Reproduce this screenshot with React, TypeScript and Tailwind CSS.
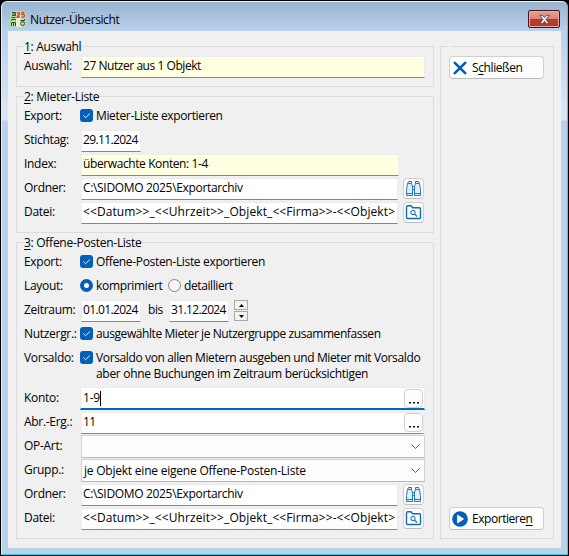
import type { ReactNode } from 'react';

function Group({ title, num, className, children }: { title: string; num: string; className: string; children: ReactNode }) {
  return (
    <section className={`relative border border-[#dcdcdc] pl-[7px] pt-[7px] ${className}`}>
      <h2 className="absolute -top-[9px] left-[7px] h-[17px] bg-[#f0f0f0] leading-[17px] tracking-[-0.28px]">
        <span className="underline underline-offset-2">{num}</span>: {title}
      </h2>
      {children}
    </section>
  );
}

function Row({ label, tall, children }: { label: string; tall?: boolean; children: ReactNode }) {
  return (
    <div className={`flex ${tall ? 'h-10' : 'h-6'}`}>
      <div className="w-[57px] shrink-0 leading-6 tracking-[-0.3px]">{label}</div>
      {children}
    </div>
  );
}

function Field({ className, children }: { className: string; children?: ReactNode }) {
  return (
    <div className={`mt-[2px] flex h-[22px] shrink-0 items-center overflow-hidden border border-[#ececec] border-b-[#868686] pb-[2px] pl-px leading-[18px] shadow-[inset_0_1px_0_#fff] ${className}`}>
      {children}
    </div>
  );
}

function Check() {
  return (
    <span className="mt-[5px] -ml-px mr-[3px] flex size-[13px] shrink-0 items-center justify-center rounded-[3px] bg-[#005fb8]">
      <svg className="size-[13px]" viewBox="0 0 13 13" fill="none" stroke="#e4effa" strokeWidth="1">
        <path d="M3.3 6.5 5.6 8.7 10 4.4" />
      </svg>
    </span>
  );
}

function IconButton({ children }: { children: ReactNode }) {
  return (
    <button className="ml-[5px] mt-[2px] flex size-[21px] items-center justify-center rounded-[4px] border border-[#d0d0d0] border-b-[#bcbcbc] bg-[#fdfdfd]">
      {children}
    </button>
  );
}

function Binoculars() {
  return (
    <svg className="size-[17px] shrink-0" viewBox="0 0 17 17" fill="#e3eef9" stroke="#2b76c0" strokeWidth="1">
      <path d="M2.5 3.5 3.5 1.5H6.5V3.5L7.5 6.5V15.5H1.5V9.5ZM14.5 3.5 13.5 1.5H10.5V3.5L9.5 6.5V15.5H15.5V9.5Z" />
      <path d="M2.5 3.5H6.5M10.5 3.5H14.5M1.5 13.5H7.5M9.5 13.5H15.5M7 6.5H10M7.5 9.5H9.5" />
    </svg>
  );
}

function FolderSearch() {
  return (
    <svg className="size-[17px] shrink-0" viewBox="0 0 17 17" fill="none" stroke="#1668b8">
      <path d="M1.5 3Q1.5 1.7 2.8 1.7H6L7.7 3.8H14.4Q15.5 3.8 15.5 5V13.4Q15.5 14.5 14.4 14.5H2.7Q1.5 14.5 1.5 13.4Z" strokeWidth="1.4" />
      <circle cx="8" cy="8.5" r="2.2" fill="#e3eef9" />
      <path d="m9.7 10.2 2.3 2.3" strokeWidth="1.2" />
    </svg>
  );
}

function Dots() {
  return (
    <button className="ml-auto mt-px flex h-[19px] w-[19px] shrink-0 items-center justify-center rounded-[4px] border border-[#d0d0d0] bg-[#fdfdfd]">
      <svg className="h-[17px] w-[17px]" viewBox="0 0 17 17" fill="#111">
        <path d="M4 12h2v1.5H4zM8 12h2v1.5H8zM12 12h2v1.5h-2z" />
      </svg>
    </button>
  );
}

function Dropdown({ children }: { children?: ReactNode }) {
  return (
    <div className="mt-px flex h-[23px] w-[344px] items-center border border-[#d0d0d0] border-b-[#b8b8b8] bg-[#fdfdfd] pl-[2px] pr-[3px]">
      <span className="tracking-[-0.22px]">{children}</span>
      <svg className="ml-auto h-[9px] w-[11px]" viewBox="0 0 11 9" fill="none" stroke="#5c5c5c">
        <path d="m1.5 2.5 4 4 4-4" />
      </svg>
    </div>
  );
}

function FileRows() {
  return (
    <>
      <Row label="Ordner:">
        <Field className="w-[317px] bg-white tracking-[-0.33px]">C:\SIDOMO 2025\Exportarchiv</Field>
        <IconButton><Binoculars /></IconButton>
      </Row>
      <Row label="Datei:">
        <Field className="w-[317px] bg-white tracking-[0.1px]">{'<<Datum>>_<<Uhrzeit>>_Objekt_<<Firma>>-<<Objekt>'}</Field>
        <IconButton><FolderSearch /></IconButton>
      </Row>
    </>
  );
}

function AppIcon() {
  return (
    <svg className="size-4" viewBox="0 0 16 16">
      <rect width="16" height="16" fill="#b4dca6" />
      <rect x="6" y="5" width="5" height="11" fill="#dff2d4" />
      <g fill="none" stroke="#3c4a3c" strokeWidth="1">
        <path d="M2 1.5H5.5V4.5H2M2 3H5M1.5 6.5H5.5M1.5 9.5V8.5H5.5V9.5M1.5 15V11.5H5.5V15M3.5 11.5V15M10.5 9.5H14.5V8M10.5 12.5Q10.5 10.5 12.5 10.5T14.5 12.5 12.5 14.5 10.5 12.5" />
      </g>
      <path d="M7 2.5Q9.5 .5 9.5 3L7 6H10M14.5 1.5H12V3.5Q14.5 3 14.5 4.7T11.5 6" fill="none" stroke="#e03c30" strokeWidth="1.3" />
    </svg>
  );
}

export default function App() {
  return (
    <div className="h-[556px] w-[569px] bg-black pt-px text-[12px] text-black" style={{ fontFamily: '"Open Sans", "Noto Sans", sans-serif' }}>
      <div className="ml-px flex h-[554px] w-[567px] flex-col rounded-t-[6px] border border-b-[#20d0e8] border-l-[#e1edf8] border-r-[#38cfe8] border-t-[#eaf2fa] bg-[#b9d1ea]">
        <header className="flex h-[29px] shrink-0 items-center rounded-t-[5px] bg-linear-to-b from-[#99b4d1] to-[#b9d1ea] pl-2 pr-[7px]">
          <span className="mt-[5px]"><AppIcon /></span>
          <h1 className="ml-[4px] mt-[7px] leading-5 tracking-[-0.4px]">Nutzer-Übersicht</h1>
          <button className="ml-auto mt-[5px] flex h-[18px] w-8 items-center justify-center rounded-[2px] border border-[#431422] bg-linear-to-b from-[#e3a294] from-0% via-[#d98373] via-50% to-[#b93a29] to-50% shadow-[inset_0_0_0_1px_#e8aaa0]">
            <svg className="h-[11px] w-[13px]" viewBox="0 0 14 12">
              <path d="M2 1.5H5L7 4 9 1.5h3L8.8 6 12 10.5H9L7 8 5 10.5H2L5.2 6Z" fill="#f6f6f6" stroke="#4b4858" strokeWidth="1" />
            </svg>
          </button>
        </header>
        <div className="flex h-[517px] bg-linear-to-b from-[#b9d1ea] from-0% via-[#dce8f5] via-[89px] to-[#b9d1ea] to-[90px] px-[6px]">
          <main className="flex w-[553px] bg-[#f0f0f0] pl-2 pt-[15px]">
            <div className="flex w-[418px] flex-col gap-[9px]">
              <Group num="1" title="Auswahl" className="h-[41px]">
                <Row label="Auswahl:">
                  <Field className="w-[344px] bg-[#ffffe1] tracking-[-0.45px]">27 Nutzer aus 1 Objekt</Field>
                </Row>
              </Group>
              <Group num="2" title="Mieter-Liste" className="h-[137px]">
                <Row label="Export:">
                  <Check /><span className="leading-6 tracking-[-0.35px]">Mieter-Liste exportieren</span>
                </Row>
                <Row label="Stichtag:">
                  <Field className="w-[60px] bg-white tracking-[-0.64px]">29.11.2024</Field>
                </Row>
                <Row label="Index:">
                  <Field className="w-[318px] bg-[#ffffe1] tracking-[-0.4px]">überwachte Konten: 1-4</Field>
                </Row>
                <FileRows />
              </Group>
              <Group num="3" title="Offene-Posten-Liste" className="h-[297px]">
                <Row label="Export:">
                  <Check /><span className="leading-6 tracking-[-0.33px]">Offene-Posten-Liste exportieren</span>
                </Row>
                <Row label="Layout:">
                  <span className="mt-[5px] -ml-px mr-[3px] size-[13px] rounded-full border-4 border-[#005fb8] bg-white" />
                  <span className="w-[72px] leading-6 tracking-[-0.32px]">komprimiert</span>
                  <span className="mt-[5px] mr-[3px] size-[13px] rounded-full border border-[#858585] bg-[#f5f5f5]" />
                  <span className="leading-6 tracking-[-0.4px]">detailliert</span>
                </Row>
                <Row label="Zeitraum:">
                  <Field className="w-[60px] bg-white tracking-[-0.64px]">01.01.2024</Field>
                  <span className="w-7 pl-[7px] leading-6 tracking-[-0.4px]">bis</span>
                  <Field className="w-[60px] bg-white tracking-[-0.64px]">31.12.2024</Field>
                  <div className="ml-[5px] mt-[2px] flex flex-col gap-px">
                    <button className="flex h-[10px] w-[14px] items-center justify-center border border-[#a8a8a8] bg-[#f3f3f3]">
                      <svg className="h-[3px] w-[5px]" viewBox="0 0 5 3"><path d="M0 3 2.5 0 5 3Z" /></svg>
                    </button>
                    <button className="flex h-[10px] w-[14px] items-center justify-center border border-[#a8a8a8] bg-[#f3f3f3]">
                      <svg className="h-[3px] w-[5px]" viewBox="0 0 5 3"><path d="M0 0 2.5 3 5 0Z" /></svg>
                    </button>
                  </div>
                </Row>
                <Row label="Nutzergr.:">
                  <Check /><span className="whitespace-nowrap leading-6 tracking-[-0.42px]">ausgewählte Mieter je Nutzergruppe zusammenfassen</span>
                </Row>
                <Row label="Vorsaldo:" tall>
                  <Check />
                  <p className="whitespace-nowrap pt-1 leading-4 tracking-[-0.37px]">
                    Vorsaldo von allen Mietern ausgeben und Mieter mit Vorsaldo<br />
                    <span className="tracking-[-0.31px]">aber ohne Buchungen im Zeitraum berücksichtigen</span>
                  </p>
                </Row>
                <Row label="Konto:">
                  <div className="-ml-px mt-px flex h-[23px] w-[345px] items-center border border-b-2 border-[#ececec] border-b-[#0067c0] bg-white pl-[2px] pr-px">
                    <span className="tracking-[-0.2px]">1-9</span>
                    <span className="h-[15px] w-px bg-black" />
                    <Dots />
                  </div>
                </Row>
                <Row label="Abr.-Erg.:">
                  <Field className="w-[343px] bg-white tracking-[-0.6px]">11<Dots /></Field>
                </Row>
                <Row label="OP-Art:"><Dropdown /></Row>
                <Row label="Grupp.:"><Dropdown>je Objekt eine eigene Offene-Posten-Liste</Dropdown></Row>
                <FileRows />
              </Group>
            </div>
            <aside className="relative ml-[6px] flex h-[493px] w-[114px] flex-col items-start justify-between border border-[#dcdcdc] pb-[8px] pl-2 pt-[9px]">
              <span className="absolute -top-px left-[7px] h-px w-[3px] bg-[#f0f0f0]" />
              <button className="flex h-[23px] w-[95px] items-center rounded-[4px] border border-[#d0d0d0] border-b-[#bcbcbc] bg-[#fdfdfd] pl-[3px]">
                <svg className="size-[14px]" viewBox="0 0 14 14" stroke="#005fb8" strokeWidth="2.6" strokeLinecap="round"><path d="m1.8 1.8 10.4 10.4M12.2 1.8 1.8 12.2" /></svg>
                <span className="ml-[5px] tracking-[-0.4px]">S<u className="underline-offset-2">c</u>hließen</span>
              </button>
              <button className="flex h-[23px] w-[95px] items-center rounded-[4px] border border-[#d0d0d0] border-b-[#bcbcbc] bg-[#fdfdfd] pl-[2px]">
                <svg className="size-[16px]" viewBox="0 0 16 16"><circle cx="8" cy="8" r="7.8" fill="#005fb8" /><path d="M5.7 4.2v7.6L11.5 8Z" fill="#fff" stroke="#fff" strokeLinejoin="round" /></svg>
                <span className="ml-[4px] tracking-[-0.45px]">Exportiere<u className="underline-offset-2">n</u></span>
              </button>
            </aside>
          </main>
        </div>
      </div>
    </div>
  );
}
